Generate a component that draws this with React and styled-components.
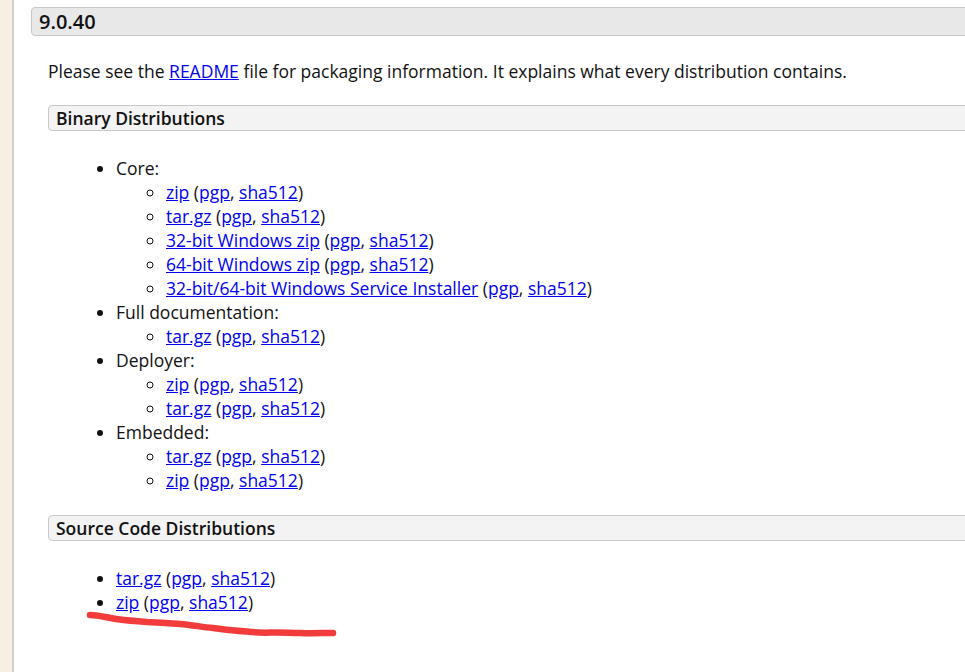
import React from "react";
import styled, { createGlobalStyle } from "styled-components";

const Global = createGlobalStyle`
  html, body { margin: 0; padding: 0; background: #fff; }
  body { font-family: "Open Sans", "Liberation Sans", sans-serif; color: #111; overflow: hidden; }
`;

const Page = styled.div`
  display: flex;
  width: 965px;
  height: 672px;
  position: relative;
  overflow: hidden;
`;

const SideStrip = styled.div`
  width: 12px;
  flex: none;
  background: #f7efe2;
  border-right: 2px solid #cfcfcf;
`;

const Main = styled.main`
  flex: 1;
  padding: 7px 0 0 17px;
  min-width: 0;
`;

const VersionHeader = styled.h3`
  margin: 0 -20px 0 0;
  height: 29px;
  box-sizing: border-box;
  background: #e8e8e8;
  border: 1px solid #c8c8c8;
  border-radius: 4px;
  padding: 0 0 0 7px;
  font-size: 20px;
  font-weight: 600;
  line-height: 27px;
  color: #111;
`;

const Body = styled.div`
  padding-left: 17px;
`;

const Para = styled.p`
  margin: 23px 0 22px;
  font-size: 17.5px;
  line-height: 24px;
`;

const SubHeader = styled.h4`
  margin: 0 -20px 0 0;
  height: 26px;
  box-sizing: border-box;
  background: #f3f3f3;
  border: 1px solid #c8c8c8;
  border-radius: 4px;
  padding: 0 0 0 7px;
  font-size: 17.5px;
  font-weight: 600;
  line-height: 24px;
  color: #111;
`;

const List = styled.ul`
  margin: ${(p) => (p.$nested ? "0" : p.$top)} 0 0 0;
  padding-left: ${(p) => (p.$nested ? "50px" : "68px")};
  list-style-type: ${(p) => (p.$nested ? "circle" : "disc")};
  font-size: 17.5px;
  line-height: 24px;
`;

const Item = styled.li``;

const Link = styled.a`
  color: #0000ee;
  text-decoration: underline;
`;

const Gap = styled.div`
  height: 23px;
`;

const Annotation = styled.svg`
  position: absolute;
  left: 0;
  top: 0;
  pointer-events: none;
`;

const Entry = ({ name }) => (
  <Item>
    <Link href="#">{name}</Link> (<Link href="#">pgp</Link>, <Link href="#">sha512</Link>)
  </Item>
);

const groups = [
  { title: "Core:", items: ["zip", "tar.gz", "32-bit Windows zip", "64-bit Windows zip", "32-bit/64-bit Windows Service Installer"] },
  { title: "Full documentation:", items: ["tar.gz"] },
  { title: "Deployer:", items: ["zip", "tar.gz"] },
  { title: "Embedded:", items: ["tar.gz", "zip"] },
];

export default function App() {
  return (
    <>
      <Global />
      <Page>
        <SideStrip />
        <Main>
          <VersionHeader>9.0.40</VersionHeader>
          <Body>
            <Para>
              Please see the <Link href="#">README</Link> file for packaging information. It explains what every distribution contains.
            </Para>
            <SubHeader>Binary Distributions</SubHeader>
            <List $top="25px">
              {groups.map((g) => (
                <Item key={g.title}>
                  {g.title}
                  <List $nested>
                    {g.items.map((n, i) => (
                      <Entry key={i} name={n} />
                    ))}
                  </List>
                </Item>
              ))}
            </List>
            <Gap />
            <SubHeader>Source Code Distributions</SubHeader>
            <List $top="25px">
              <Entry name="tar.gz" />
              <Entry name="zip" />
            </List>
          </Body>
        </Main>
        <Annotation width="965" height="672" viewBox="0 0 965 672">
          <path
            d="M90 615 C 97 615, 104 617, 113 618.5 C 125 620.5, 136 621, 147 622 C 158 622.5, 168 623, 180 624 C 192 625, 202 627, 213 628 C 225 629.5, 236 631, 247 631.5 C 256 632.5, 262 633, 270 632.5 C 282 632, 290 633, 300 633 C 312 633.5, 322 633, 333 633"
            fill="none"
            stroke="#f23c3c"
            strokeWidth="6.5"
            strokeLinecap="round"
            strokeLinejoin="round"
          />
        </Annotation>
      </Page>
    </>
  );
}
